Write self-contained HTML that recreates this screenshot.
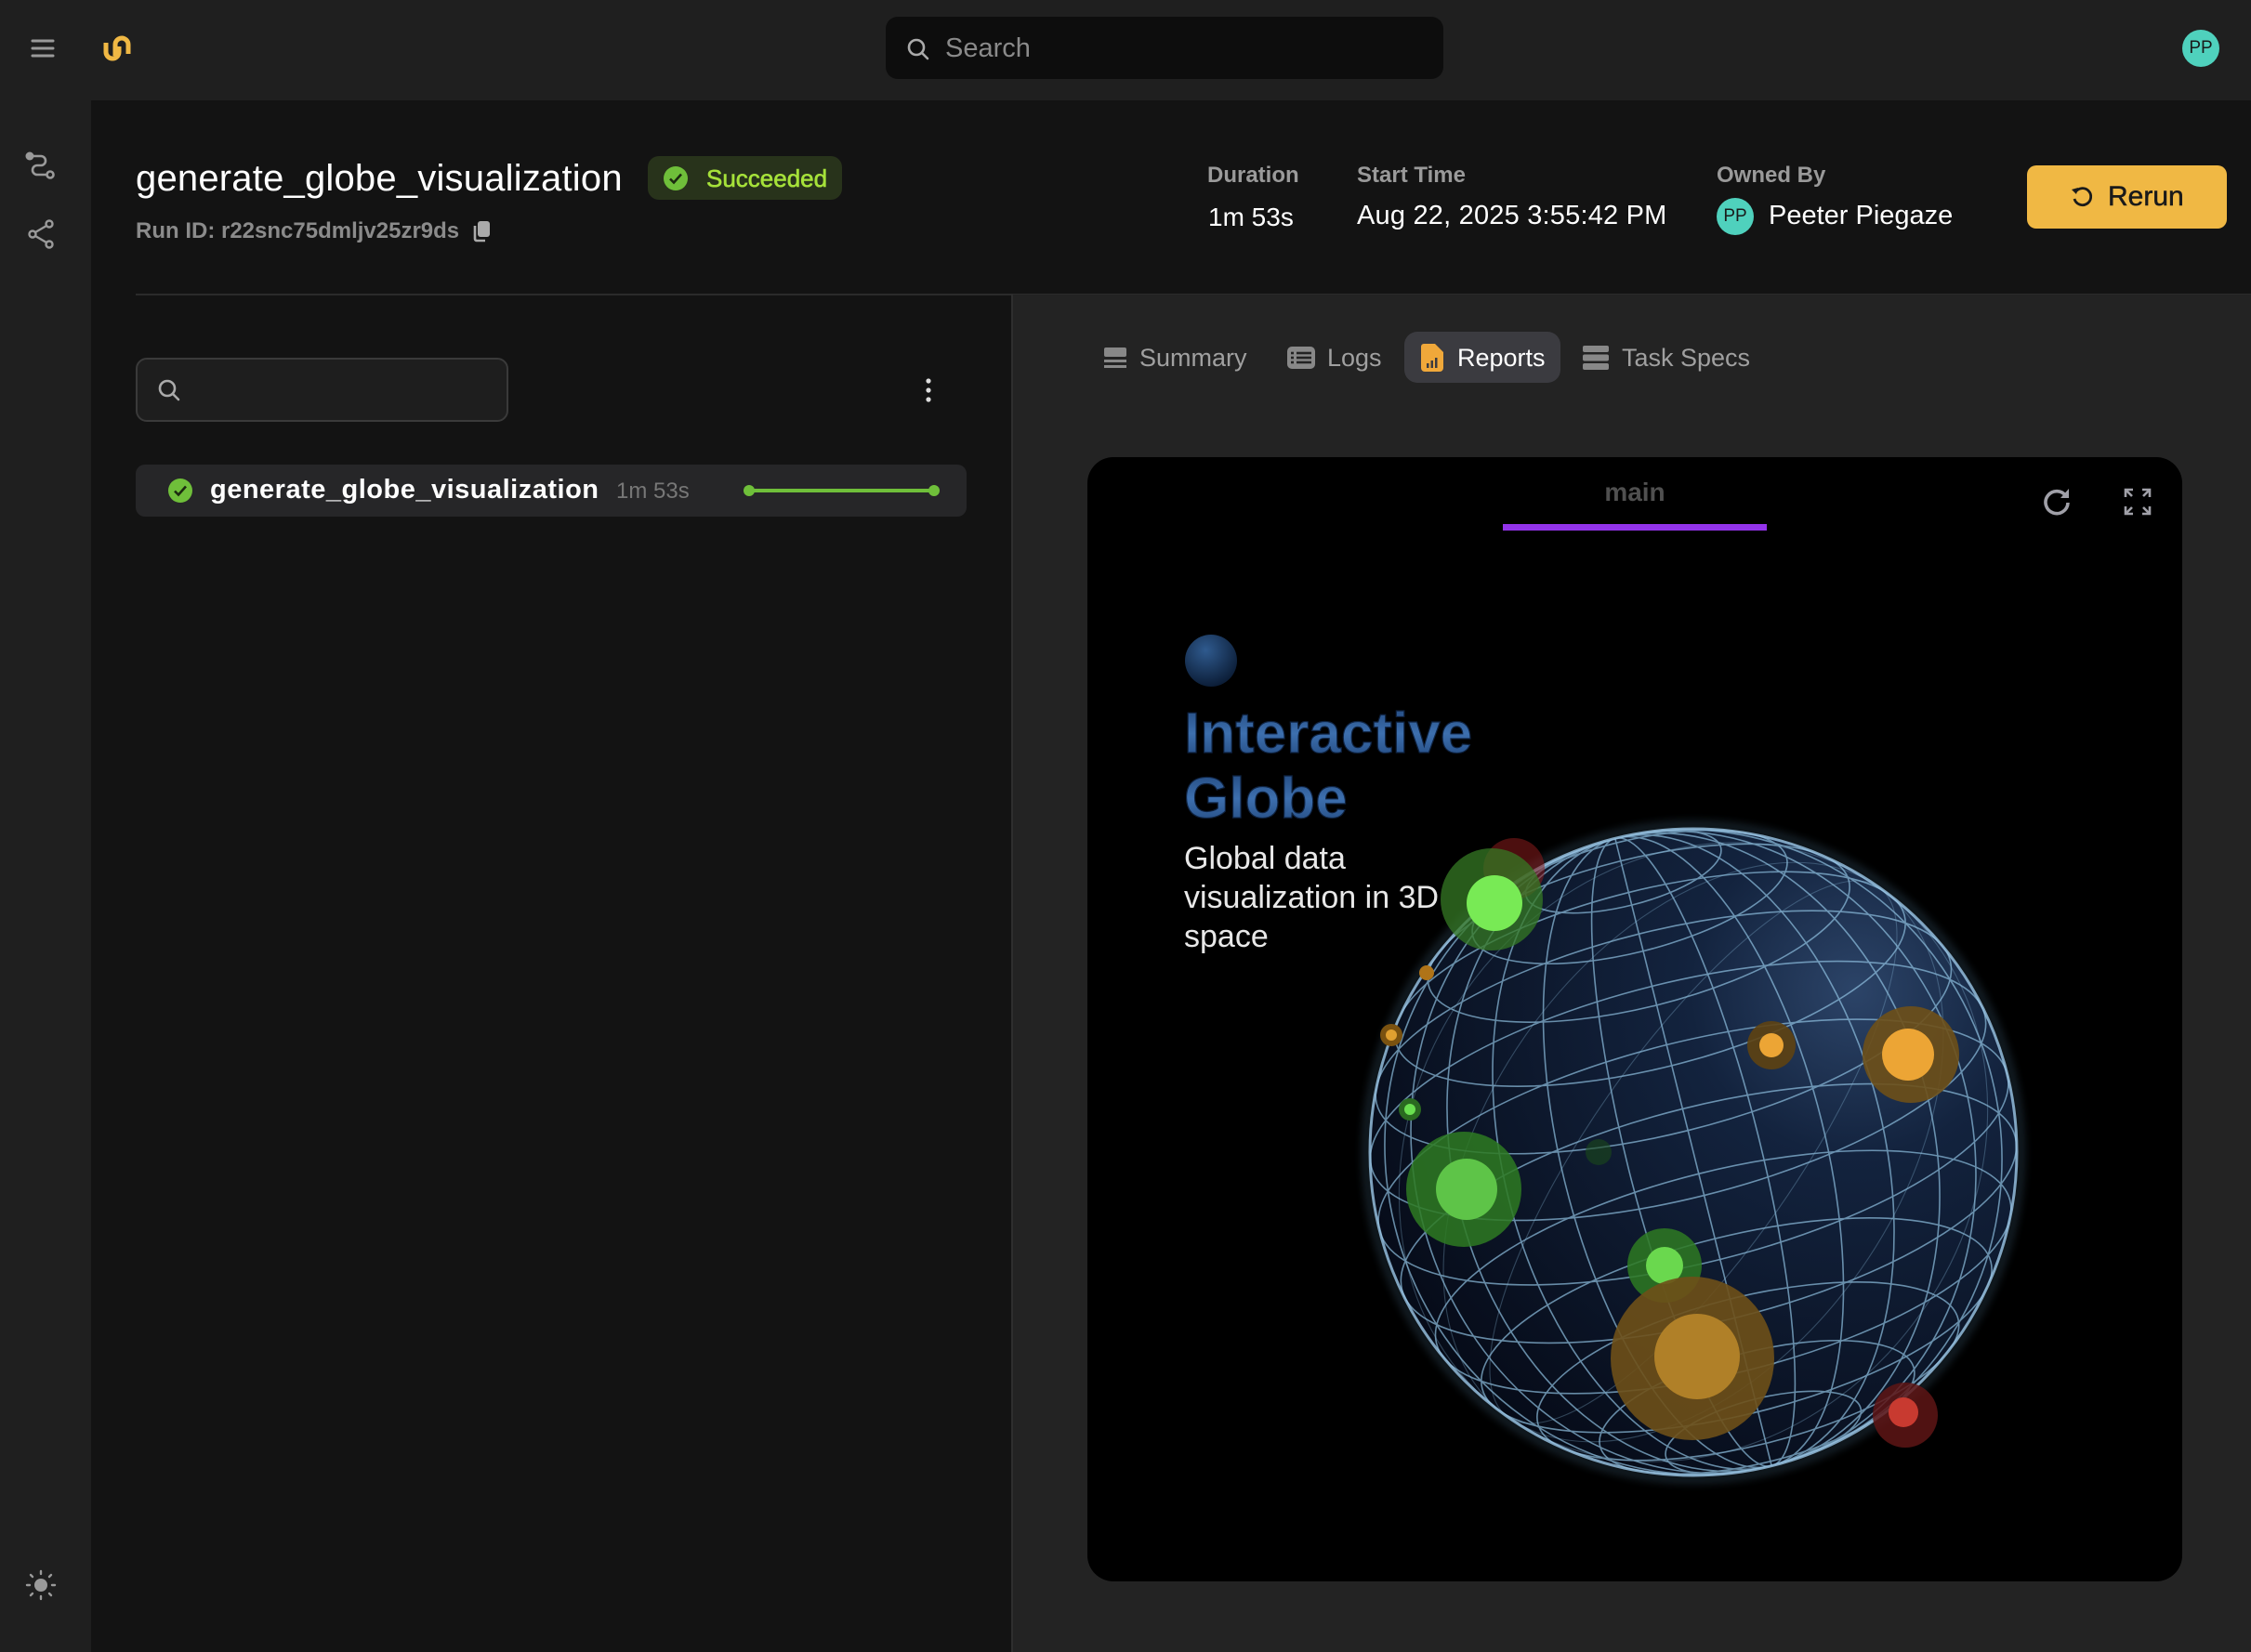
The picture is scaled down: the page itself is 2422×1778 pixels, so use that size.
<!DOCTYPE html>
<html><head><meta charset="utf-8">
<style>
*{margin:0;padding:0;box-sizing:border-box}
html,body{width:2422px;height:1778px;overflow:hidden;background:#131313;font-family:"Liberation Sans",sans-serif;color:#fff}
.abs{position:absolute}
.t{position:absolute;white-space:nowrap;line-height:1}
</style></head><body>
<div class="abs" style="left:0;top:0;width:2422px;height:108px;background:#1f1f1f"></div>
<div class="abs" style="left:0;top:108px;width:98px;height:1670px;background:#1f1f1f"></div>
<svg class="abs" style="left:32px;top:40px" width="28" height="24" viewBox="0 0 28 24"><g stroke="#9a9a9a" stroke-width="3" stroke-linecap="round"><line x1="3" y1="4" x2="25" y2="4"/><line x1="3" y1="12" x2="25" y2="12"/><line x1="3" y1="20" x2="25" y2="20"/></g></svg>
<svg class="abs" style="left:110px;top:36px" width="34" height="32" viewBox="0 0 34 32"><g fill="none" stroke="#f0b844" stroke-width="5"><path d="M4 10 V20 a7 7 0 0 0 14 0 V14"/><path d="M14 24 V12 a7 7 0 0 1 14 0 V22"/></g></svg>
<div class="abs" style="left:953px;top:18px;width:600px;height:67px;background:#0d0d0d;border-radius:13px"></div>
<svg class="abs" style="left:975px;top:40px" width="26" height="26" viewBox="0 0 26 26"><circle cx="11" cy="11" r="8" fill="none" stroke="#aaa" stroke-width="2.6"/><line x1="17" y1="17" x2="23" y2="23" stroke="#aaa" stroke-width="2.6" stroke-linecap="round"/></svg>
<div class="t" style="left:1017px;top:38px;font-size:29px;color:#8a8a8a">Search</div>
<div class="abs" style="left:2348px;top:32px;width:40px;height:40px;border-radius:50%;background:#4fd1bd;color:#1a1a1a;font-size:19px;text-align:center;line-height:40px">PP</div>
<svg class="abs" style="left:26px;top:162px" width="36" height="36" viewBox="0 0 36 36"><circle cx="6" cy="6" r="4.5" fill="#9a9a9a"/><path d="M9 6 H18 a5 5 0 0 1 0 10 H14 a5 5 0 0 0 0 10 H24" fill="none" stroke="#9a9a9a" stroke-width="2.6"/><circle cx="28" cy="26" r="3.5" fill="none" stroke="#9a9a9a" stroke-width="2.6"/></svg>
<svg class="abs" style="left:28px;top:236px" width="32" height="32" viewBox="0 0 32 32"><g fill="none" stroke="#9a9a9a" stroke-width="2.4"><circle cx="25" cy="5" r="3.5"/><circle cx="7" cy="16" r="3.5"/><circle cx="25" cy="27" r="3.5"/><line x1="10" y1="14" x2="22" y2="7"/><line x1="10" y1="18" x2="22" y2="25"/></g></svg>
<svg class="abs" style="left:26px;top:1688px" width="36" height="36" viewBox="0 0 36 36"><circle cx="18" cy="18" r="7" fill="#9a9a9a"/><g stroke="#9a9a9a" stroke-width="2.4" stroke-linecap="round"><line x1="18" y1="3" x2="18" y2="6"/><line x1="18" y1="30" x2="18" y2="33"/><line x1="3" y1="18" x2="6" y2="18"/><line x1="30" y1="18" x2="33" y2="18"/><line x1="7" y1="7" x2="9" y2="9"/><line x1="27" y1="27" x2="29" y2="29"/><line x1="7" y1="29" x2="9" y2="27"/><line x1="27" y1="9" x2="29" y2="7"/></g></svg>

<div class="t" style="left:146px;top:172px;font-size:40px;color:#fff;letter-spacing:0.2px">generate_globe_visualization</div>
<div class="abs" style="left:697px;top:168px;width:209px;height:47px;border-radius:12px;background:#28331b"></div>
<svg class="abs" style="left:713px;top:178px" width="28" height="28" viewBox="0 0 28 28"><circle cx="14" cy="14" r="13" fill="#6fbf3a"/><path d="M8 14.5 l4 4 l8-9" fill="none" stroke="#1c2a10" stroke-width="2.6"/></svg>
<div class="t" style="left:760px;top:179px;font-size:26px;color:#a6e23a;-webkit-text-stroke:0.6px #a6e23a">Succeeded</div>
<div class="t" style="left:146px;top:237px;font-size:24px;color:#8b8b8b;font-weight:bold">Run ID: r22snc75dmljv25zr9ds</div>
<svg class="abs" style="left:508px;top:236px" width="22" height="26" viewBox="0 0 22 26"><rect x="6" y="2" width="13" height="17" rx="3" fill="#aaa"/><path d="M3 7 V21 a2 2 0 0 0 2 2 H14" fill="none" stroke="#aaa" stroke-width="2.6"/></svg>

<div class="t" style="left:1299px;top:177px;font-size:24px;color:#9a9a9a;font-weight:bold">Duration</div>
<div class="t" style="left:1300px;top:220px;font-size:28px;color:#fff">1m 53s</div>
<div class="t" style="left:1460px;top:177px;font-size:24px;color:#9a9a9a;font-weight:bold">Start Time</div>
<div class="t" style="left:1460px;top:218px;font-size:29px;color:#fff;letter-spacing:0.2px">Aug 22, 2025 3:55:42 PM</div>
<div class="t" style="left:1847px;top:177px;font-size:24px;color:#9a9a9a;font-weight:bold">Owned By</div>
<div class="abs" style="left:1847px;top:213px;width:40px;height:40px;border-radius:50%;background:#4fd1bd;color:#1a1a1a;font-size:19px;text-align:center;line-height:40px">PP</div>
<div class="t" style="left:1903px;top:218px;font-size:29px;color:#fff">Peeter Piegaze</div>
<div class="abs" style="left:2181px;top:178px;width:215px;height:68px;border-radius:10px;background:#f0b844"></div>
<svg class="abs" style="left:2226px;top:197px" width="28" height="28" viewBox="0 0 28 28"><path d="M7 10 A9 9 0 1 1 6 17" fill="none" stroke="#1a1a1a" stroke-width="2.8"/><path d="M3 7 L8 12 L10 5 Z" fill="#1a1a1a"/></svg>
<div class="t" style="left:2268px;top:197px;font-size:30px;color:#1a1a1a;-webkit-text-stroke:0.5px #1a1a1a">Rerun</div>

<div class="abs" style="left:146px;top:316px;width:2276px;height:2px;background:#2b2b2b"></div>
<div class="abs" style="left:1088px;top:317px;width:1334px;height:1461px;background:#232323;border-left:2px solid #2e2e2e"></div>

<div class="abs" style="left:146px;top:385px;width:401px;height:69px;border-radius:12px;background:#1e1e1e;border:2px solid #3a3a3a"></div>
<svg class="abs" style="left:168px;top:406px" width="28" height="28" viewBox="0 0 28 28"><circle cx="12" cy="12" r="8" fill="none" stroke="#aaa" stroke-width="2.6"/><line x1="18" y1="18" x2="24" y2="24" stroke="#aaa" stroke-width="2.6" stroke-linecap="round"/></svg>
<svg class="abs" style="left:994px;top:405px" width="10" height="30" viewBox="0 0 10 30"><g fill="#ddd"><circle cx="5" cy="5" r="2.6"/><circle cx="5" cy="15" r="2.6"/><circle cx="5" cy="25" r="2.6"/></g></svg>
<div class="abs" style="left:146px;top:500px;width:894px;height:56px;border-radius:10px;background:#262628"></div>
<svg class="abs" style="left:180px;top:514px" width="28" height="28" viewBox="0 0 28 28"><circle cx="14" cy="14" r="13" fill="#6fbf3a"/><path d="M8 14.5 l4 4 l8-9" fill="none" stroke="#1c2a10" stroke-width="2.6"/></svg>
<div class="t" style="left:226px;top:513px;font-size:29px;color:#fff;font-weight:bold;letter-spacing:0.5px">generate_globe_visualization</div>
<div class="t" style="left:663px;top:517px;font-size:24px;color:#777">1m 53s</div>
<div class="abs" style="left:805px;top:526px;width:200px;height:4px;background:#6fbf3a"></div>
<div class="abs" style="left:800px;top:522px;width:12px;height:12px;border-radius:50%;background:#6fbf3a"></div>
<div class="abs" style="left:999px;top:522px;width:12px;height:12px;border-radius:50%;background:#6fbf3a"></div>

<svg class="abs" style="left:1187px;top:372px" width="26" height="26" viewBox="0 0 26 26"><rect x="1" y="2" width="24" height="10" rx="2" fill="#888"/><rect x="1" y="15" width="24" height="3" fill="#888"/><rect x="1" y="21" width="24" height="3" fill="#888"/></svg>
<div class="t" style="left:1226px;top:372px;font-size:27px;color:#a0a0a0">Summary</div>
<svg class="abs" style="left:1384px;top:372px" width="32" height="26" viewBox="0 0 32 26"><rect x="1" y="1" width="30" height="24" rx="5" fill="#888"/><g stroke="#232323" stroke-width="2.6"><line x1="5" y1="8" x2="8" y2="8"/><line x1="11" y1="8" x2="27" y2="8"/><line x1="5" y1="13" x2="8" y2="13"/><line x1="11" y1="13" x2="27" y2="13"/><line x1="5" y1="18" x2="8" y2="18"/><line x1="11" y1="18" x2="27" y2="18"/></g></svg>
<div class="t" style="left:1428px;top:372px;font-size:27px;color:#a0a0a0">Logs</div>
<div class="abs" style="left:1511px;top:357px;width:168px;height:55px;border-radius:14px;background:#3b3b40"></div>
<svg class="abs" style="left:1528px;top:369px" width="26" height="32" viewBox="0 0 26 32"><path d="M4 1 H16 L25 10 V27 a4 4 0 0 1-4 4 H5 a4 4 0 0 1-4-4 V4 a3 3 0 0 1 3-3Z" fill="#f0a83a"/><g fill="#3b3b40"><rect x="7" y="22" width="2.5" height="5"/><rect x="11.5" y="19" width="2.5" height="8"/><rect x="16" y="16" width="2.5" height="11"/></g></svg>
<div class="t" style="left:1568px;top:372px;font-size:27px;color:#fff">Reports</div>
<svg class="abs" style="left:1703px;top:372px" width="28" height="26" viewBox="0 0 28 26"><g fill="#888"><rect x="0" y="0" width="28" height="7" rx="2"/><rect x="0" y="9.5" width="28" height="7" rx="2"/><rect x="0" y="19" width="28" height="7" rx="2"/></g></svg>
<div class="t" style="left:1745px;top:372px;font-size:27px;color:#a0a0a0">Task Specs</div>

<div class="abs" style="left:1170px;top:492px;width:1178px;height:1210px;border-radius:28px;background:#000;overflow:hidden">
<div class="t" style="left:0;width:1178px;text-align:center;top:24px;font-size:28px;color:#505050;font-weight:bold">main</div>
<div class="abs" style="left:447px;top:72px;width:284px;height:7px;background:#9333ea"></div>
<svg class="abs" style="left:1026px;top:30px" width="34" height="34" viewBox="0 0 34 34"><path d="M27 12 A12 12 0 1 0 29 19" fill="none" stroke="#a0a0a8" stroke-width="3.6"/><path d="M21 14 L30 14 L30 4 Z" fill="#a0a0a8"/></svg>
<svg class="abs" style="left:1114px;top:32px" width="32" height="32" viewBox="0 0 32 32"><g fill="none" stroke="#a0a0a8" stroke-width="2.6"><path d="M3 11 V3 H11 M3 3 L10 10"/><path d="M29 11 V3 H21 M29 3 L22 10"/><path d="M3 21 V29 H11 M3 29 L10 22"/><path d="M29 21 V29 H21 M29 29 L22 22"/></g></svg>
</div>

<svg class="abs" style="left:1170px;top:492px" width="1178" height="1210" viewBox="1170 492 1178 1210">
<defs>
<radialGradient id="gf" cx="0.75" cy="0.25" r="0.85"><stop offset="0" stop-color="#2c4468"/><stop offset="0.3" stop-color="#13233e"/><stop offset="1" stop-color="#060b18"/></radialGradient>
<radialGradient id="sb" cx="0.4" cy="0.3" r="0.7"><stop offset="0" stop-color="#2f5a8e"/><stop offset="1" stop-color="#0c1e38"/></radialGradient>
<linearGradient id="tg" x1="0" y1="0" x2="0" y2="1"><stop offset="0" stop-color="#1f4478"/><stop offset="0.5" stop-color="#3d6fae"/><stop offset="1" stop-color="#1f4478"/></linearGradient>
<filter id="bl"><feGaussianBlur stdDeviation="5"/></filter>
<clipPath id="gc"><circle cx="1822" cy="1240" r="348"/></clipPath>
</defs>
<circle cx="1822" cy="1240" r="352" fill="none" stroke="#6fa8d0" stroke-width="6" opacity="0.3" filter="url(#bl)"/>
<circle cx="1822" cy="1240" r="348" fill="url(#gf)"/>
<g clip-path="url(#gc)">
<g transform="translate(1822 1240) rotate(-14)" fill="none" stroke="#8fc0e0" stroke-width="1.6" opacity="0.7">
<ellipse cx="0" cy="0" rx="348" ry="119"/>
<ellipse cx="0" cy="-68" rx="340" ry="116"/><ellipse cx="0" cy="68" rx="340" ry="116"/>
<ellipse cx="0" cy="-133" rx="318" ry="109"/><ellipse cx="0" cy="133" rx="318" ry="109"/>
<ellipse cx="0" cy="-192" rx="282" ry="96"/><ellipse cx="0" cy="192" rx="282" ry="96"/>
<ellipse cx="0" cy="-243" rx="233" ry="80"/><ellipse cx="0" cy="243" rx="233" ry="80"/>
<ellipse cx="0" cy="-283" rx="174" ry="60"/><ellipse cx="0" cy="283" rx="174" ry="60"/>
<ellipse cx="0" cy="-311" rx="108" ry="37"/><ellipse cx="0" cy="311" rx="108" ry="37"/>
<line x1="0" y1="-348" x2="0" y2="348"/>
<ellipse cx="0" cy="0" rx="72" ry="348"/><ellipse cx="0" cy="0" rx="142" ry="348"/>
<ellipse cx="0" cy="0" rx="205" ry="348"/><ellipse cx="0" cy="0" rx="259" ry="348"/>
<ellipse cx="0" cy="0" rx="301" ry="348"/><ellipse cx="0" cy="0" rx="331" ry="348"/>
</g>
<g transform="translate(1822 1240) rotate(35)" fill="none" stroke="#8fc0e0" stroke-width="1.1" opacity="0.3">
<ellipse cx="0" cy="0" rx="110" ry="348"/><ellipse cx="0" cy="0" rx="220" ry="348"/><ellipse cx="0" cy="0" rx="300" ry="348"/>
</g>
</g>
<circle cx="1822" cy="1240" r="348" fill="none" stroke="#9cc8e8" stroke-width="3" opacity="0.8"/>
<circle cx="1629" cy="935" r="33" fill="#8a1c1c" opacity="0.55"/>
<circle cx="1605" cy="968" r="55" fill="#357a24" opacity="0.75"/>
<circle cx="1608" cy="972" r="30" fill="#78ea55"/>
<circle cx="1535" cy="1047" r="8" fill="#b07418"/>
<circle cx="1497" cy="1114" r="12" fill="#7a5210"/><circle cx="1497" cy="1114" r="6" fill="#e0a030"/>
<circle cx="1517" cy="1194" r="12" fill="#2a6a20"/><circle cx="1517" cy="1194" r="6" fill="#6ae050"/>
<circle cx="1575" cy="1280" r="62" fill="#2e7a22" opacity="0.85"/><circle cx="1578" cy="1280" r="33" fill="#5ec448"/>
<circle cx="1791" cy="1362" r="40" fill="#2e7a22" opacity="0.85"/><circle cx="1791" cy="1362" r="20" fill="#6ad84e"/>
<circle cx="1821" cy="1462" r="88" fill="#6e5018" opacity="0.9"/><circle cx="1826" cy="1460" r="46" fill="#b08028"/>
<circle cx="2056" cy="1135" r="52" fill="#6e5018" opacity="0.9"/><circle cx="2053" cy="1135" r="28" fill="#eca535"/>
<circle cx="1906" cy="1125" r="26" fill="#5e4212" opacity="0.9"/><circle cx="1906" cy="1125" r="13" fill="#eca535"/>
<circle cx="2050" cy="1523" r="35" fill="#5e1515" opacity="0.85"/><circle cx="2048" cy="1520" r="16" fill="#c83a30"/>
<circle cx="1720" cy="1240" r="14" fill="#1a4a1a" opacity="0.6"/>
<circle cx="1303" cy="711" r="28" fill="url(#sb)"/>
<text x="1274" y="810" font-family="Liberation Sans, sans-serif" font-weight="bold" font-size="62" fill="url(#tg)" stroke="#0e2240" stroke-width="1.2">Interactive</text>
<text x="1274" y="880" font-family="Liberation Sans, sans-serif" font-weight="bold" font-size="62" fill="url(#tg)" stroke="#0e2240" stroke-width="1.2">Globe</text>
<text font-family="Liberation Sans, sans-serif" font-size="34" fill="#e8e8e8"><tspan x="1274" y="935">Global data</tspan><tspan x="1274" y="977">visualization in 3D</tspan><tspan x="1274" y="1019">space</tspan></text>
</svg>
</body></html>
